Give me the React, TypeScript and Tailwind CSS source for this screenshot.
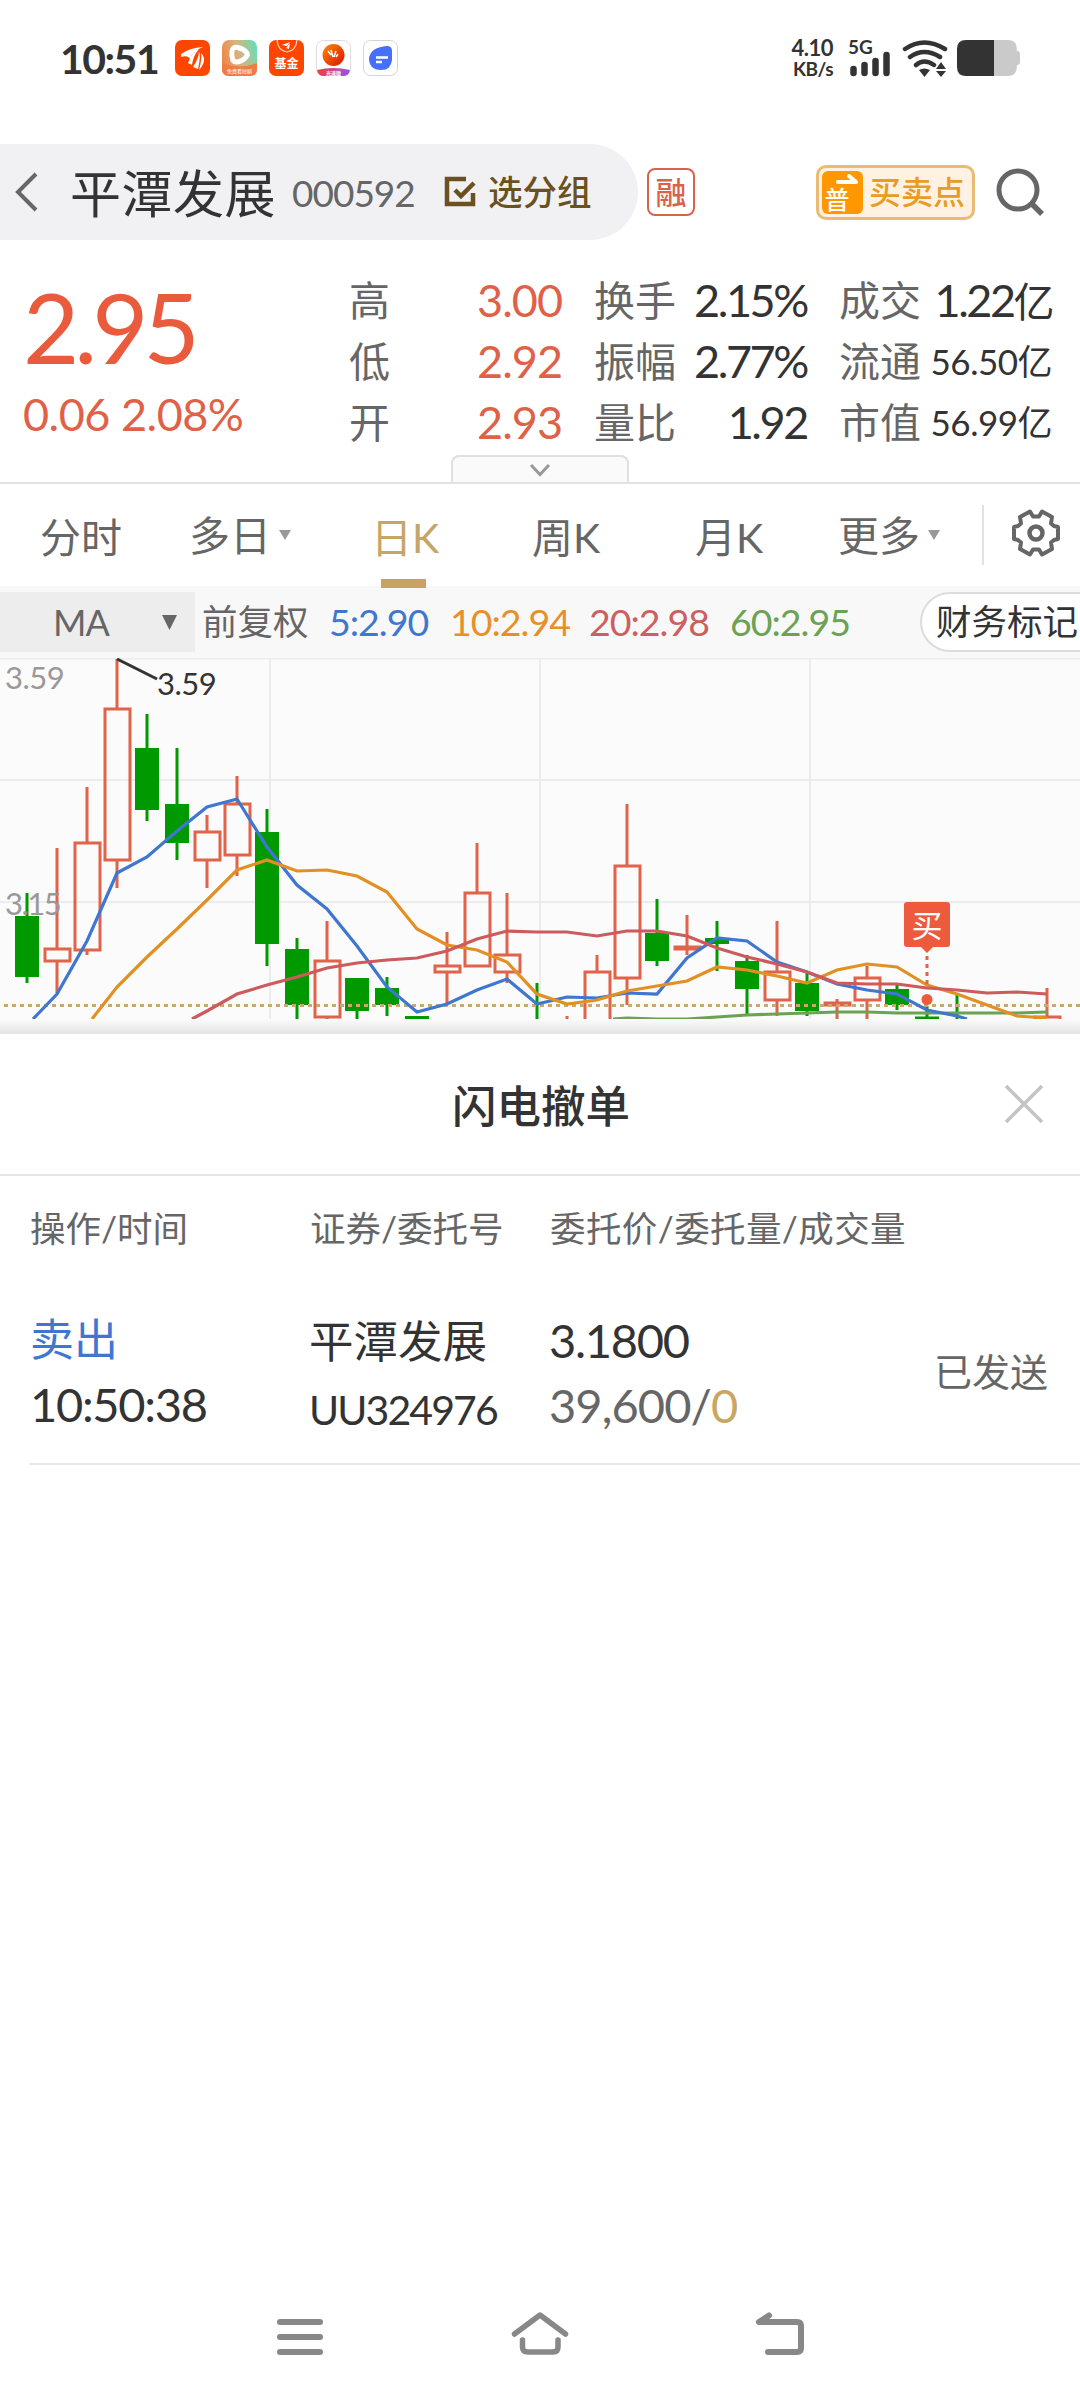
import type { ReactNode } from "react"

type Candle = {
    i: number
    high: number
    low: number
    top: number
    bottom: number
    up?: boolean
}

// y values are chart pixels, i is the slot on the time axis
const candles: Candle[] = [
    { i: 0, high: 235, low: 325, top: 258, bottom: 319 },
    { i: 1, high: 190, low: 335, top: 291, bottom: 303, up: true },
    { i: 2, high: 129, low: 297, top: 185, bottom: 292, up: true },
    { i: 3, high: 1, low: 230, top: 51, bottom: 202, up: true },
    { i: 4, high: 56, low: 163, top: 90, bottom: 152 },
    { i: 5, high: 90, low: 202, top: 146, bottom: 185 },
    { i: 6, high: 157, low: 230, top: 174, bottom: 202, up: true },
    { i: 7, high: 118, low: 218, top: 146, bottom: 197, up: true },
    { i: 8, high: 151, low: 308, top: 174, bottom: 286 },
    { i: 9, high: 280, low: 370, top: 291, bottom: 347 },
    { i: 10, high: 263, low: 370, top: 303, bottom: 359, up: true },
    { i: 11, high: 320, low: 370, top: 320, bottom: 353 },
    { i: 12, high: 319, low: 358, top: 330, bottom: 347 },
    { i: 13, high: 358, low: 370, top: 358, bottom: 370 },
    { i: 14, high: 274, low: 346, top: 308, bottom: 314, up: true },
    { i: 15, high: 185, low: 308, top: 235, bottom: 308, up: true },
    { i: 16, high: 235, low: 325, top: 297, bottom: 314, up: true },
    { i: 17, high: 325, low: 370, top: 365, bottom: 370 },
    { i: 18, high: 358, low: 370, top: 366, bottom: 370, up: true },
    { i: 19, high: 297, low: 370, top: 314, bottom: 372, up: true },
    { i: 20, high: 146, low: 347, top: 208, bottom: 320, up: true },
    { i: 21, high: 241, low: 308, top: 275, bottom: 303 },
    { i: 22, high: 257, low: 297, top: 289, bottom: 291, up: true },
    { i: 23, high: 263, low: 313, top: 280, bottom: 286 },
    { i: 24, high: 297, low: 356, top: 303, bottom: 331 },
    { i: 25, high: 263, low: 358, top: 314, bottom: 342, up: true },
    { i: 26, high: 313, low: 358, top: 325, bottom: 353 },
    { i: 27, high: 341, low: 370, top: 345, bottom: 347, up: true },
    { i: 28, high: 308, low: 370, top: 320, bottom: 342, up: true },
    { i: 29, high: 327, low: 352, top: 331, bottom: 347 },
    { i: 30, high: 348, low: 359, top: 358.5, bottom: 361 },
    { i: 31, high: 336, low: 370, top: 366, bottom: 370 },
    { i: 34, high: 330, low: 359, top: 359, bottom: 372, up: true },
]

const averages = [
    {
        color: "#6ba253",
        points: "613,361 627,360 657,361 687,361 717,359 747,357 777,356 807,355 837,354 867,354 897,355 1017,355 1047,354",
    },
    {
        color: "#3f77d0",
        points: "33,361 57,336 87,283 117,215 147,199 177,173 207,149 237,141 267,189 297,227 327,251 357,288 387,329 417,354 447,346 477,332 507,321 537,346 567,339 597,340 627,335 657,336 687,300 717,280 747,283 777,304 807,314 837,326 867,332 897,336 927,352 957,358 967,361",
    },
    {
        color: "#e29023",
        points: "92,361 117,329 147,299 177,271 207,242 237,212 267,202 297,213 327,212 357,218 387,234 417,271 447,287 477,292 507,304 537,336 567,346 597,342 627,333 657,328 687,323 717,309 747,312 777,318 807,325 837,312 867,306 897,309 927,327 957,336 987,347 1017,358 1047,360",
    },
    {
        color: "#cd5a5c",
        points: "192,361 207,353 237,336 267,327 297,319 327,310 357,305 387,302 417,300 447,293 477,281 507,273 537,274 567,274 597,278 627,273 657,273 687,278 717,290 747,299 777,306 807,314 837,325 867,326 897,326 927,330 957,332 987,335 1017,334 1047,336",
    },
]

const tabs = [
    { label: "分时", box: "ml-10 w-[149px]" },
    { label: "多日", box: "w-[182px] -translate-y-0.5", arrow: true },
    { label: "日K", box: "w-[161px]", active: true },
    { label: "周K", box: "w-[163px]" },
    { label: "月K", box: "w-[143px]" },
    { label: "更多", box: "w-[144px] -translate-y-0.5", arrow: true },
]

function StatusBar() {
    return (
        <div className="flex h-[116px] items-center pl-[60px]">
            <div className="w-[115px] text-[41px] leading-none font-bold tracking-[-1.500px]">10:51</div>

            {/* Notification icons */}
            <div className="flex gap-[12px]">
                <svg width="35" height="36" viewBox="0 0 35 36">
                    <rect width="35" height="36" rx="7" fill="#ff4600" />
                    <path
                        d="M6 14Q14 8 28 7Q17 11 15 19Q13 15 6 17ZM13 23Q17 12 24 9Q18 16 17 25ZM18 27Q24 18 24 11Q26 16 23 29ZM24 30Q27 20 26 13Q33 20 24 30Z"
                        fill="#fff"
                    />
                </svg>
                <svg width="35" height="36" viewBox="0 0 35 36">
                    <defs>
                        <linearGradient id="play" x1="0" y1="0.6" x2="1" y2="0.3">
                            <stop offset="0" stopColor="#f08548" />
                            <stop offset="0.5" stopColor="#d9b27c" />
                            <stop offset="1" stopColor="#6bdcb5" />
                        </linearGradient>
                    </defs>
                    <rect width="35" height="36" rx="7" fill="url(#play)" />
                    <path d="M0 23Q17 30 35 23V29Q35 36 28 36H7Q0 36 0 29Z" fill="#f07c42" />
                    <path d="M10 11Q11 6 16 7.500Q22 9 25 13Q26 15 24 17Q21 21 15 22Q11 22 10.500 19Q9.500 15 10 11Z" fill="none" stroke="#fff" strokeWidth="5" />
                    <text x="17.500" y="33" fontSize="5" textAnchor="middle" fill="#fff">免费看短剧</text>
                </svg>
                <svg width="35" height="36" viewBox="0 0 35 36">
                    <rect width="35" height="36" rx="7" fill="#ff4600" />
                    <path d="M8 0Q9 11 18 12Q27 11 28 0" fill="none" stroke="#ffd5c4" strokeWidth="1.200" />
                    <path d="M13 5L21 2L18 6ZM17 8L21 3L20 9Z" fill="#fff" />
                    <text x="17.500" y="28" fontSize="12" fontWeight="bold" textAnchor="middle" fill="#fff">基金</text>
                </svg>
                <svg width="35" height="36" viewBox="0 0 35 36">
                    <defs>
                        <linearGradient id="ball" x1="0" y1="0" x2="1" y2="1">
                            <stop offset="0" stopColor="#ff8a00" />
                            <stop offset="1" stopColor="#d81200" />
                        </linearGradient>
                        <linearGradient id="base">
                            <stop offset="0" stopColor="#f0403a" />
                            <stop offset="1" stopColor="#9a50e8" />
                        </linearGradient>
                    </defs>
                    <rect x="0.500" y="0.500" width="34" height="35" rx="7" fill="#fff" stroke="#ddd" />
                    <circle cx="17.500" cy="15" r="11" fill="url(#ball)" />
                    <path d="M12 11l3 4m0-5l2 7m1 0l2-6m0 6l2-3" stroke="#fff" strokeWidth="1.500" />
                    <path d="M1 30Q17 26 34 30Q33 36 27 36H8Q2 36 1 30Z" fill="url(#base)" />
                    <text x="17.500" y="35" fontSize="5" fontWeight="bold" textAnchor="middle" fill="#fff">光速版</text>
                </svg>
                <svg width="35" height="36" viewBox="0 0 35 36">
                    <rect x="0.500" y="0.500" width="34" height="35" rx="7" fill="#fff" stroke="#d4d4d4" />
                    <path d="M6 18Q8 7 24 6Q29 6 29 11V20Q28 30 18 30Q6 30 6 18Z" fill="#4570fb" />
                    <path d="M13 17.500H25M13 22H19" stroke="#fff" strokeWidth="2.500" />
                </svg>
            </div>

            <div className="ml-auto flex w-[291px] items-center">
                <div className="w-[44px] text-right text-[22px] leading-[21px] font-bold tracking-[-0.5px]">
                    <div>4.10</div>
                    <div className="text-[19px]">KB/s</div>
                </div>
                <svg className="ml-[15px]" width="46" height="48" viewBox="0 0 46 48">
                    <text x="0" y="20" fontSize="19" fontWeight="bold" fill="#333">5G</text>
                    <path d="M5.500 35V39M16.500 31V39M27.500 27V39M38.500 21V39" stroke="#333" strokeWidth="6.500" strokeLinecap="round" />
                </svg>
                <svg className="ml-[8px]" width="46" height="38" viewBox="0 0 46 38">
                    <path d="M3 10Q22 -3 43 10M8 18Q22 8 38 18M14 26Q22 19 32 26" fill="none" stroke="#333" strokeWidth="4.500" strokeLinecap="round" />
                    <path d="M17 31Q22 28 28 31L22.500 38ZM39 23L44 30H34ZM39 38L44 32H34Z" fill="#333" />
                </svg>
                <svg className="ml-[9px]" width="64" height="36" viewBox="0 0 64 36">
                    <path d="M36 0H52Q60 0 60 11Q63 11 63 14V22Q63 25 60 25Q60 36 52 36H36Z" fill="#cacaca" />
                    <path d="M37 0H9Q0 0 0 9V27Q0 36 9 36H37Z" fill="#333" />
                </svg>
            </div>
        </div>
    )
}

function StockHeader() {
    return (
        <header className="mt-[28px] flex h-24 items-center">
            <div className="flex h-24 w-[638px] items-center rounded-r-full bg-[#f1f1f4] pl-[14px]">
                <svg width="24" height="40" viewBox="0 0 24 40">
                    <path d="M22 2L4 20L22 38" fill="none" stroke="#666" strokeWidth="4" />
                </svg>
                <div className="ml-[32px] w-[222px] pt-0.5 text-[51px] leading-none tracking-[0.5px]">平潭发展</div>
                <div className="w-[152px] text-[37px] leading-none tracking-[-1px] text-[#666]">000592</div>
                <svg width="32" height="32" viewBox="0 0 32 32">
                    <path d="M22 3H3V28H29V17" fill="none" stroke="#6b5120" strokeWidth="4.500" />
                    <path d="M11 14L17 20L30 7" fill="none" stroke="#6b5120" strokeWidth="4.500" />
                </svg>
                <div className="ml-[12px] text-[34.500px] leading-none font-medium text-[#6b5120]">选分组</div>
            </div>
            <div className="ml-[9px] flex h-12 w-12 items-center justify-center rounded-lg border-2 border-[#d8624a] text-[31px] leading-none font-medium text-[#d8624a]">
                融
            </div>
            <div className="ml-[121px] flex h-[55px] w-[159px] items-center rounded-[10px] border-[3px] border-[#e9bb74] bg-[#fff2e2] pl-[3px]">
                <svg width="41" height="43" viewBox="0 0 41 43">
                    <rect width="41" height="43" rx="6" fill="#ff9800" />
                    <path d="M16 11H34L27 5" fill="none" stroke="#fff" strokeWidth="4" strokeLinecap="round" strokeLinejoin="round" />
                    <text x="15" y="38" fontSize="25" fontWeight="500" textAnchor="middle" fill="#fff">普</text>
                </svg>
                <div className="ml-[6px] text-[32px] leading-none font-medium text-[#e89c22]">买卖点</div>
            </div>
            <svg className="ml-[21px]" width="50" height="50" viewBox="0 0 50 50">
                <circle cx="22" cy="23" r="19" fill="none" stroke="#666" strokeWidth="5" />
                <path d="M35 36L46 47" stroke="#666" strokeWidth="5.500" />
            </svg>
        </header>
    )
}

function Stat({ label, children, className }: { label: string; children: ReactNode; className: string }) {
    return (
        <div className={`flex h-[61px] items-center justify-between leading-none ${className}`}>
            <span className="text-[41px] tracking-normal text-[#666]">{label}</span>
            {children}
        </div>
    )
}

function Quote() {
    return (
        <section className="relative flex h-[244px] border-b-2 border-[#e2e2e2] pt-[30px]">
            <div className="w-[349px] pl-[23px] text-[#ea5b3d]">
                <div className="h-[118px] text-[97px] leading-[113px] tracking-[-5px]">2.95</div>
                <div className="text-[45px] leading-[53px] tracking-[-0.5px] text-[#df6148]">0.06 2.08%</div>
            </div>
            <div className="w-[213px] text-[45px] tracking-[-1px] text-[#df6148]">
                <Stat label="高" className="">3.00</Stat>
                <Stat label="低" className="">2.92</Stat>
                <Stat label="开" className="">2.93</Stat>
            </div>
            <div className="ml-[32px] w-[213px] text-[45px] tracking-[-2.400px]">
                <Stat label="换手" className="">2.15%</Stat>
                <Stat label="振幅" className="">2.77%</Stat>
                <Stat label="量比" className="">1.92</Stat>
            </div>
            <div className="ml-[32px] w-[213px]">
                <Stat label="成交" className="text-[45px] tracking-[-2.500px]">
                    <span>1.22<span className="text-[41px]">亿</span></span>
                </Stat>
                <Stat label="流通" className="text-[35px] tracking-[-0.500px]">56.50亿</Stat>
                <Stat label="市值" className="text-[35px] tracking-[-0.500px]">56.99亿</Stat>
            </div>

            {/* Expand handle */}
            <div className="absolute bottom-0 left-[451px] flex h-[27px] w-[178px] items-center justify-center rounded-t-lg border-2 border-b-0 border-[#e0e0e0] bg-[#fafafa]">
                <svg width="22" height="14" viewBox="0 0 22 14">
                    <path d="M2 2L11 11.500L20 2" fill="none" stroke="#999" strokeWidth="3" />
                </svg>
            </div>
        </section>
    )
}

function ChartTabs() {
    return (
        <nav className="flex h-[102px] items-center text-[41px] leading-none text-[#666]">
            {tabs.map((tab) => (
                <div key={tab.label} className={`flex h-full items-center pt-1 ${tab.box}`}>
                    <div className={tab.active ? "relative flex h-full items-center text-[#c5a568]" : ""}>
                        {tab.label}
                        {tab.active && <span className="absolute -bottom-0.5 left-[10px] h-[9px] w-[45px] bg-[#c9a35f]" />}
                    </div>
                    {tab.arrow && (
                        <svg className="ml-2" width="12" height="10" viewBox="0 0 12 10">
                            <path d="M0 0H12L6 10Z" fill="#999" />
                        </svg>
                    )}
                </div>
            ))}
            <div className="h-[60px] w-0.5 bg-[#e2e2e2]" />
            <svg className="-mt-1 ml-[27px]" width="50" height="50" viewBox="0 0 50 50" fill="none" stroke="#666" strokeLinejoin="round">
                <path
                    d="M19 3.500L22 8.500H28L31 3.500L41 9L40 15.500L43 18L47 19V31L43 32L40 34.500L41 41L31 46.500L28 41.500H22L19 46.500L9 41L10 34.500L7 32L3 31V19L7 18L10 15.500L9 9Z"
                    strokeWidth="4"
                />
                <circle cx="25" cy="25" r="6.500" strokeWidth="4.500" />
            </svg>
        </nav>
    )
}

function MaBar() {
    return (
        <div className="flex h-[72px] items-center overflow-hidden bg-[#f8f8f8] text-[37.500px] leading-none tracking-[-1px] whitespace-nowrap">
            <div className="flex h-[60px] w-[195px] shrink-0 items-center bg-[#ededed] pl-[53px] text-[36px] text-[#666]">
                <span className="w-[109px]">MA</span>
                <svg width="15" height="15" viewBox="0 0 15 15">
                    <path d="M0 0H15L7.500 15Z" fill="#666" />
                </svg>
            </div>
            <div className="ml-[7px] w-[127px] shrink-0 text-[35.500px] tracking-normal text-[#666]">前复权</div>
            <div className="w-[121px] shrink-0 text-[#3f77d0]">5:2.90</div>
            <div className="w-[139px] shrink-0 text-[#e89028]">10:2.94</div>
            <div className="w-[141px] shrink-0 text-[#cd5f60]">20:2.98</div>
            <div className="w-[190px] shrink-0 text-[#6ba253]">60:2.95</div>
            <div className="flex h-[60px] w-[200px] shrink-0 items-center rounded-full border-2 border-[#dcdcdc] bg-white pl-[14px] text-[35.500px] tracking-normal">
                财务标记
            </div>
        </div>
    )
}

function KLineChart() {
    return (
        <svg className="block bg-[#fbfbfb]" width="1080" height="361" viewBox="0 0 1080 361">
            <path d="M0 0.500H1080M0 122H1080M0 244H1080M270 0V361M540 0V361M810 0V361" stroke="#ececec" strokeWidth="2" />
            {candles.map((c) => {
                const x = 27 + c.i * 30
                return c.up ? (
                    <g key={c.i} fill="none" stroke="#e0634a" strokeWidth="3">
                        <path d={`M${x} ${c.high}V${c.top}M${x} ${c.bottom}V${Math.max(c.low, c.bottom)}`} />
                        <rect x={x - 12} y={c.top} width="25" height={c.bottom - c.top} />
                    </g>
                ) : (
                    <g key={c.i} fill="#009a00">
                        <rect x={x - 1.5} y={c.high} width="3" height={c.low - c.high} />
                        <rect x={x - 12} y={c.top} width="24" height={c.bottom - c.top} />
                    </g>
                )
            })}
            <path d="M4 347.500H1080" stroke="#c9a973" strokeWidth="3" strokeDasharray="4 4" />
            {averages.map((line) => (
                <polyline key={line.color} points={line.points} fill="none" stroke={line.color} strokeWidth="3.200" />
            ))}

            {/* Price labels */}
            <path d="M117 1L157 21" stroke="#333" strokeWidth="3" />
            <g fontSize="31" letterSpacing="-0.500">
                <text x="5" y="31" fill="#999">3.59</text>
                <text x="5" y="257" fill="#999" letterSpacing="-1.500">3.15</text>
                <text x="157" y="37" fill="#333">3.59</text>
            </g>

            {/* Buy marker */}
            <rect x="904" y="244" width="46" height="45" rx="3" fill="#ee5b3c" />
            <path d="M921 289H933L927 295Z" fill="#ee5b3c" />
            <path d="M927 298V330" stroke="#e0634a" strokeWidth="3" strokeDasharray="4 4" />
            <circle cx="927" cy="341.500" r="5.500" fill="#ee5b3c" />
            <text x="927" y="279" fontSize="31" textAnchor="middle" fill="#fff">买</text>
        </svg>
    )
}

function CancelSheet() {
    return (
        <section className="flex-1 bg-white">
            <div className="flex h-[142px] items-center justify-end border-b-2 border-[#e6e6e6] pr-[36px]">
                <h2 className="w-[552px] pt-1 text-[44.500px] leading-none font-medium">闪电撤单</h2>
                <svg width="40" height="40" viewBox="0 0 40 40">
                    <path d="M2 2L38 38M38 2L2 38" stroke="#c4c4c4" strokeWidth="3.500" />
                </svg>
            </div>

            <div className="flex h-[106px] items-center pl-[30px] text-[35.500px] leading-none text-[#666]">
                <div className="w-[280px]">操作/时间</div>
                <div className="w-[240px]">证券/委托号</div>
                <div className="tracking-[0.400px]">委托价/委托量/成交量</div>
            </div>

            <div className="ml-[30px] flex h-[183px] border-b-2 border-[#e6e6e6] pt-[25px] text-[47px] tracking-[-1.300px]">
                <div className="w-[279px] leading-[65px]">
                    <div className="text-[44px] tracking-normal text-[#3f77d0]">卖出</div>
                    <div>10:50:38</div>
                </div>
                <div className="w-[240px] leading-[65px]">
                    <div className="pt-px text-[44.500px] tracking-normal">平潭发展</div>
                    <div className="pt-1 text-[41px] tracking-[-1.900px]">UU324976</div>
                </div>
                <div className="w-[385px] leading-[65px]">
                    <div className="pt-px">3.1800</div>
                    <div className="tracking-[-0.900px] text-[#666]">39,600/<span className="text-[#c9a763]">0</span></div>
                </div>
                <div className="text-[38px] leading-[128px] tracking-normal text-[#666]">已发送</div>
            </div>
        </section>
    )
}

function NavBar() {
    return (
        <footer className="flex h-[130px] items-center justify-center gap-[180px]">
            <svg width="60" height="60" viewBox="0 0 60 60" fill="none" stroke="#888" strokeWidth="6" strokeLinecap="round">
                <path d="M10 17H50M10 32H50M10 47H50" />
            </svg>
            <svg width="60" height="60" viewBox="0 0 60 60" fill="none" stroke="#888" strokeWidth="5.500" strokeLinecap="round" strokeLinejoin="round">
                <path d="M4.500 29L30 10L55.500 29M12.500 35V42Q12.500 47 18 47H43Q48 47 48 42V35" />
            </svg>
            <svg width="60" height="60" viewBox="0 0 60 60" fill="none" stroke="#888" strokeWidth="6" strokeLinecap="round" strokeLinejoin="round">
                <path d="M19 10.500L9 17H47Q51 17 51 21V43Q51 47 47 47H18" />
            </svg>
        </footer>
    )
}

export default function App() {
    return (
        <main className="flex h-[2400px] w-[1080px] flex-col overflow-hidden bg-white font-[Lato,'Noto_Sans_CJK_SC',sans-serif] text-[#333]">
            <StatusBar />
            <StockHeader />
            <Quote />
            <ChartTabs />
            <MaBar />
            <KLineChart />
            <div className="h-[15px] bg-linear-to-b from-[#fbfbfb] to-[#e4e4e4]" />
            <CancelSheet />
            <NavBar />
        </main>
    )
}
